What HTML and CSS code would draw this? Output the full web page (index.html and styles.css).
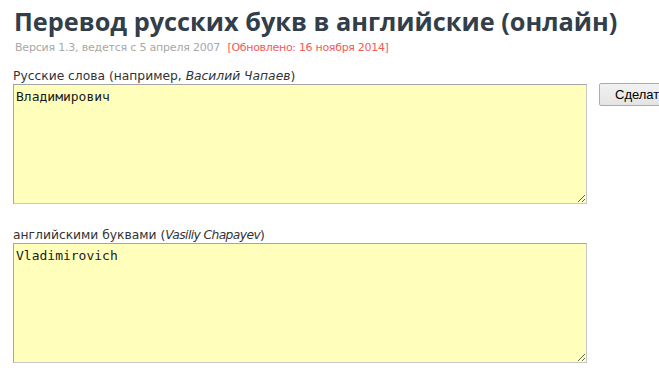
FILE: index.html
```html
<!DOCTYPE html>
<html>
<head>
<meta charset="utf-8">
<title>Перевод русских букв в английские (онлайн)</title>
<link rel="stylesheet" href="styles.css">
</head>
<body>
<h1 class="title">Перевод русских букв в английские (онлайн)</h1>
<p class="meta">Версия 1.3, ведется с 5 апреля 2007 <span class="updated">[Обновлено: 16 ноября 2014]</span></p>

<form class="translit">
  <div class="field">
    <label class="caption" for="src">Русские слова (например, <i>Василий Чапаев</i>)</label>
    <div class="row">
      <textarea id="src" class="box">Владимирович</textarea>
      <button type="button" class="go">Сделать</button>
    </div>
  </div>
  <div class="field">
    <label class="caption" for="dst">английскими буквами (<i class="latin">Vasiliy Chapayev</i>)</label>
    <div class="row">
      <textarea id="dst" class="box">Vladimirovich</textarea>
    </div>
  </div>
</form>
</body>
</html>
```

FILE: styles.css
```css
body {
  margin: 0;
  padding: 0 13px;
  font-family: "DejaVu Sans", Verdana, sans-serif;
  background: #fff;
  overflow: hidden;
}

.title {
  margin: 4px 0 0 1px;
  font-family: "Open Sans", sans-serif;
  font-weight: bold;
  font-size: 25.3px;
  line-height: 34px;
  color: #323e4a;
  white-space: nowrap;
}

.meta {
  margin: 2px 0 0 2px;
  font-size: 11px;
  line-height: 16px;
  letter-spacing: -0.2px;
  color: #a8a8a8;
  white-space: nowrap;
}
.meta .updated { color: #f25a5a; margin-left: 4px; letter-spacing: -0.3px; }

.translit { margin-top: 13px; }

.field { margin-bottom: 24px; }

.caption {
  display: block;
  font-size: 12.3px;
  line-height: 15px;
  color: #333;
  white-space: nowrap;
}
.caption .latin { letter-spacing: -0.6px; }

.row {
  display: flex;
  align-items: flex-start;
  gap: 12px;
}

.box {
  width: 574px;
  height: 120px;
  box-sizing: border-box;
  margin: 0;
  padding: 4px 2px;
  background: #ffffbb;
  border: 1px solid #c8c8c8;
  border-top-color: #a4a4a4;
  border-left-color: #a4a4a4;
  font-family: "DejaVu Sans Mono", monospace;
  font-size: 13px;
  line-height: 16px;
  color: #1a1a1a;
  resize: both;
  flex: none;
}

.go {
  flex: none;
  width: 80px;
  height: 23px;
  margin-top: -1px;
  padding: 0 0 0 15px;
  text-align: left;
  font-family: "Liberation Sans", Arial, sans-serif;
  font-size: 13px;
  color: #000;
  border: 1px solid #acacac;
  border-radius: 2px;
  background: linear-gradient(#f2f2f2, #e4e4e4);
}
```
